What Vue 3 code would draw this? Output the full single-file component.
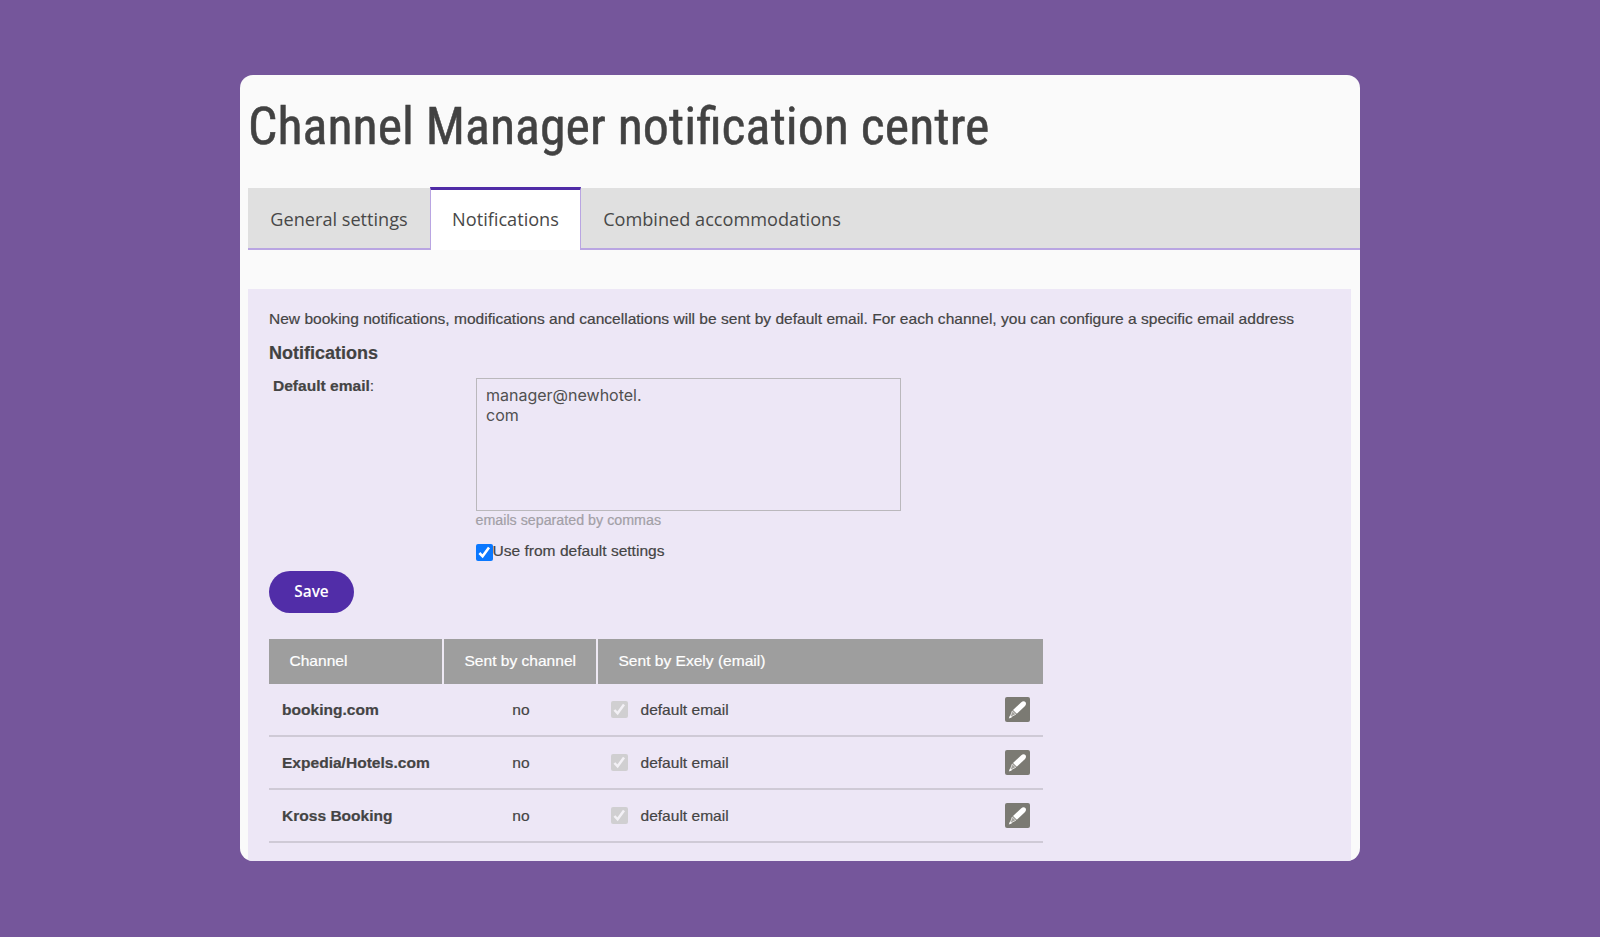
<script setup>
import { ref } from 'vue'

const tabs = ['General settings', 'Notifications', 'Combined accommodations']
const active = ref('Notifications')
const channels = ['booking.com', 'Expedia/Hotels.com', 'Kross Booking']
const email = ref('manager@newhotel.\ncom')
</script>

<template>
  <main class="stage">
    <section class="card">
      <h1><span>Channel Manager notification centre</span></h1>
      <nav class="tabs">
        <button v-for="(t, i) in tabs" :key="t" :class="['tab', 'tab' + i, { active: t === active }]" @click="active = t">
          <span>{{ t }}</span>
        </button>
        <div class="rest"></div>
      </nav>
      <div class="panel">
        <p class="intro">New booking notifications, modifications and cancellations will be sent by default email. For each channel, you can configure a specific email address</p>
        <h2>Notifications</h2>
        <div class="form">
          <div class="label"><b>Default email</b>:</div>
          <div class="field">
            <textarea v-model="email" spellcheck="false"></textarea>
            <div class="hint">emails separated by commas</div>
            <label class="use">
              <svg class="check" viewBox="0 0 17 17"><rect width="17" height="17" rx="2" fill="#0a78ff" /><path d="M3.4 9 6.6 12.3 13 3.6" fill="none" stroke="#fff" stroke-width="2.6" /></svg>
              <span>Use from default settings</span>
            </label>
          </div>
        </div>
        <button class="save">Save</button>
        <div class="table">
          <div class="row head">
            <div>Channel</div>
            <div>Sent by channel</div>
            <div>Sent by Exely (email)</div>
          </div>
          <div v-for="c in channels" :key="c" class="row">
            <b>{{ c }}</b>
            <div class="no">no</div>
            <div class="mail">
              <svg class="check" viewBox="0 0 17 17"><rect width="17" height="17" rx="2" fill="#d0cfd1" /><path d="M3.4 9 6.6 12.3 13 3.6" fill="none" stroke="#f3f1f6" stroke-width="2.5" /></svg>
              <span>default email</span>
              <svg class="edit" viewBox="0 0 25 25">
                <rect width="25" height="25" rx="2" fill="#7b7a73" />
                <path d="M8 13 16 5.4Q18.6 3.2 20.4 5 21.8 6.9 19.8 9.2L11.8 16.7Z" fill="#fff" />
                <path d="M7.3 14 10.8 17.3 5 20.3Z" fill="#a3a29d" stroke="#e8e7e4" stroke-width=".9" />
                <path d="M3.8 21.4 5 18.4 7 20.2Z" fill="#fff" />
              </svg>
            </div>
          </div>
        </div>
      </div>
    </section>
  </main>
</template>

<style>
body { margin: 0; background: #75569b; }
</style>

<style scoped>
.stage {
  width: 1600px; height: 937px; box-sizing: border-box; padding: 75px 240px 0;
  background: #75569b; overflow: hidden; color: #444;
  font: 15.56px/20px "Liberation Sans", Arial, sans-serif;
  -webkit-text-stroke: .2px;
}
.card { height: 786px; border-radius: 13px; background: #fafafa; overflow: hidden; display: flex; flex-direction: column; }
h1 {
  margin: 0; height: 112px; box-sizing: border-box; padding: 20px 0 0 8px; white-space: nowrap;
  font: 400 52.5px/62px "Roboto Condensed", Roboto, sans-serif; font-stretch: 75%; color: #424242;
  -webkit-text-stroke: .5px;
}
h1 span { display: inline-block; transform: scaleX(.989); transform-origin: 0 50%; }
.tabs { display: flex; height: 63px; margin-left: 8px; -webkit-text-stroke: 0; }
.tab, .rest { background: #e0e0e0; background-clip: padding-box; border: 0 solid #b9a5e2; border-bottom-width: 2px; border-top: 1px solid #fafafa; }
.tab { padding: 1px 0 0; width: 182px; color: #484848; font: 18.15px/26px "Open Sans", sans-serif; white-space: nowrap; }
.tab.active { padding: 0 0 3px; width: 151px; background: #fff; border: 1px solid #b9a5e2; border-top: 3px solid #4f2ba6; border-bottom: 0; }
.tab2 { width: 282px; }
.rest { flex: 1; }
.panel { width: 1103px; margin: 39px 0 0 8px; height: 572px; box-sizing: border-box; padding: 20px 0 0 21px; background: #ede7f6; }
.intro { margin: 0; width: 1026px; height: 20px; overflow: hidden; white-space: nowrap; }
h2 { margin: 13px 0 0; font: 700 18px/22px "Liberation Sans", Arial, sans-serif; color: #424242; }
.form { display: flex; margin-top: 12px; }
.label { width: 203px; padding-left: 4px; box-sizing: border-box; }
.field { padding-left: 3.5px; }
textarea {
  display: block; width: 425px; height: 133px; box-sizing: border-box; margin: 2px 0 0; padding: 6px 9.5px;
  border: 1.5px solid #bab8bc; background: transparent; resize: none; outline: 0; overflow: hidden;
  font: 400 16px/20px Inter, sans-serif; color: #505050; -webkit-text-stroke: 0;
}
.hint { color: #a29fa6; font-size: 14.27px; line-height: 18px; }
.use { display: flex; align-items: flex-start; margin-top: 12px; }
.check { width: 17px; height: 17px; flex: none; }
.use .check { margin-top: 3px; }
.save {
  display: block; margin: 10px 0 0; width: 85px; height: 42px; border: 0; border-radius: 21px; padding: 0;
  background: #512da8; color: #fff; font: 600 15.4px/20px "Open Sans", sans-serif; -webkit-text-stroke: 0;
}
.table { width: 774px; margin-top: 26px; }
.row { display: grid; grid-template-columns: 175px 154px 1fr; align-items: center; height: 53.2px; box-sizing: border-box; border-bottom: 2px solid #cfcad6; }
.row b { padding: 2px 0 0 13px; }
.head { height: 44.5px; border: 0; background: #9e9e9e; color: #fff; align-items: stretch; line-height: 44px; }
.head div { padding-left: 20.5px; border-right: 2px solid #eee9f4; }
.head div:last-child { border: 0; }
.no { text-align: center; padding-top: 2px; }
.mail { display: flex; align-items: center; padding: 0 13px 0 12.5px; }
.mail span { margin-left: 13px; flex: 1; padding-top: 2px; }
.edit { width: 25px; height: 25px; }
</style>
